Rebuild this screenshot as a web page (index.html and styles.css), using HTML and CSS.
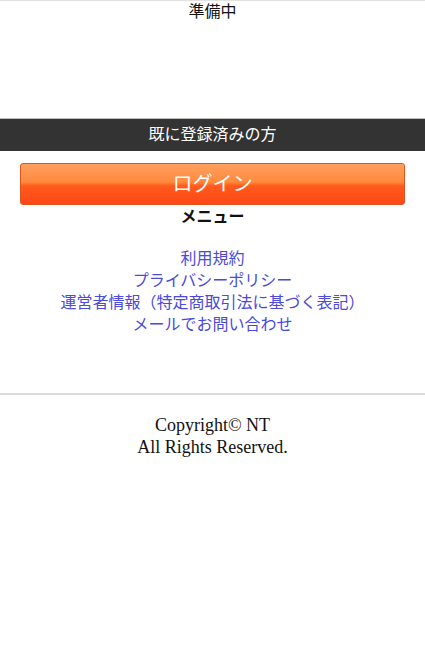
FILE: index.html
```html
<!DOCTYPE html>
<html lang="ja">
<head>
<meta charset="utf-8">
<title>準備中</title>
<link rel="stylesheet" href="styles.css">
</head>
<body>
<div class="page">
  <div class="notice">準備中</div>
  <div class="bar">既に登録済みの方</div>
  <div class="btn-wrap"><a class="login-btn" href="#">ログイン</a></div>
  <div class="menu-title">メニュー</div>
  <ul class="menu">
    <li><a href="#">利用規約</a></li>
    <li><a href="#">プライバシーポリシー</a></li>
    <li><a href="#">運営者情報（特定商取引法に基づく表記）</a></li>
    <li><a href="#">メールでお問い合わせ</a></li>
  </ul>
  <footer class="footer">
    <p>Copyright© NT</p>
    <p>All Rights Reserved.</p>
  </footer>
</div>
</body>
</html>
```

FILE: styles.css
```css
html, body {
  margin: 0;
  padding: 0;
  background: #fff;
}
body {
  font-family: "Liberation Serif", "Noto Sans CJK JP", serif;
  font-size: 16px;
  color: #111;
}
.page {
  border-top: 1px solid #e2e2e2;
  text-align: center;
}
.notice {
  line-height: 22px;
  height: 117px;
}
.bar {
  background: #333;
  border-top: 1px solid #bdbdbd;
  color: #fff;
  height: 32px;
  line-height: 32px;
  font-size: 16px;
}
.btn-wrap {
  padding: 12px 20px 0;
}
.login-btn {
  display: block;
  height: 40px;
  line-height: 40px;
  border: 1px solid #e0551e;
  border-radius: 3px;
  background: linear-gradient(to bottom, #ffa060 0%, #ff8a3e 45%, #ff5a1c 55%, #ff4818 100%);
  color: #fff;
  font-size: 20px;
  text-decoration: none;
}
.menu-title {
  font-weight: bold;
  line-height: 24px;
}
.menu {
  list-style: none;
  margin: 19px 0 0;
  padding: 0;
  line-height: 22px;
  height: 145px;
}
.menu a {
  color: #4a4ade;
  text-decoration: none;
}
.footer {
  border-top: 2px solid #dcdcdc;
  padding-top: 19px;
}
.footer p {
  margin: 0;
  font-size: 18px;
  line-height: 22px;
}
```
